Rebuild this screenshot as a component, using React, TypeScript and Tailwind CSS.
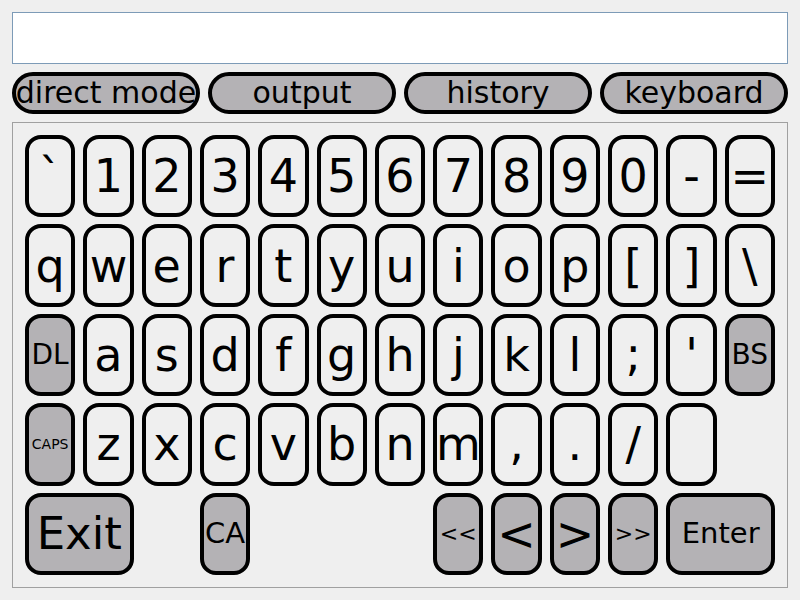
import React from "react";

type KeyDef = {
  label: string;
  special?: boolean;
  className?: string;
  textClass?: string;
};

const FONT = "font-['DejaVu_Sans',sans-serif]";

const row1 = ["`", "1", "2", "3", "4", "5", "6", "7", "8", "9", "0", "-", "="];
const row2 = ["q", "w", "e", "r", "t", "y", "u", "i", "o", "p", "[", "]", "\\"];
const row3 = ["a", "s", "d", "f", "g", "h", "j", "k", "l", ";", "'"];
const row4 = ["z", "x", "c", "v", "b", "n", "m", ",", ".", "/", ""];

const keys: KeyDef[] = [
  ...row1.map((label) => ({ label })),
  ...row2.map((label) => ({ label })),
  { label: "DL", special: true, textClass: "text-[28px]" },
  ...row3.map((label) => ({ label })),
  { label: "BS", special: true, textClass: "text-[28px]" },
  { label: "CAPS", special: true, textClass: "text-[14px]" },
  ...row4.map((label) => ({ label })),
  { label: "", className: "invisible" },
  { label: "Exit", special: true, className: "col-span-2", textClass: "text-[45px]" },
  { label: "CA", special: true, className: "col-start-4", textClass: "text-[29px]" },
  { label: "<<", special: true, className: "col-start-8", textClass: "text-[22px]" },
  { label: "<", special: true },
  { label: ">", special: true },
  { label: ">>", special: true, textClass: "text-[22px]" },
  { label: "Enter", special: true, className: "col-span-2", textClass: "text-[29px]" },
];

const tabs = ["direct mode", "output", "history", "keyboard"];

function Key({ def }: { def: KeyDef }) {
  return (
    <button
      type="button"
      className={[
        "flex items-center justify-center overflow-hidden rounded-[16px] border-4 border-black leading-none text-black",
        def.special ? "bg-[#b4b2b5]" : "bg-[#efefef]",
        def.textClass ?? "text-[46px]",
        def.className ?? "",
      ].join(" ")}
    >
      {def.label}
    </button>
  );
}

export default function App() {
  return (
    <div className={`flex h-[600px] w-[800px] flex-col gap-2 bg-[#efefef] p-3 ${FONT}`}>
      <input
        type="text"
        className="h-[52px] w-full shrink-0 border border-[#7d9bb7] bg-white px-2 outline-none"
      />
      <div className="grid h-[42px] shrink-0 grid-cols-4 gap-2">
        {tabs.map((tab) => (
          <button
            key={tab}
            type="button"
            className="flex items-center justify-center whitespace-nowrap rounded-full border-4 border-black bg-[#b4b2b5] text-[30px] leading-none text-black"
          >
            {tab}
          </button>
        ))}
      </div>
      <div className="h-[466px] shrink-0 border border-[#a0a0a0] bg-[#efefef] p-3">
        <div className="grid h-full grid-cols-[repeat(13,minmax(0,1fr))] grid-rows-5 gap-x-2 gap-y-[7px]">
          {keys.map((def, i) => (
            <Key key={i} def={def} />
          ))}
        </div>
      </div>
    </div>
  );
}
